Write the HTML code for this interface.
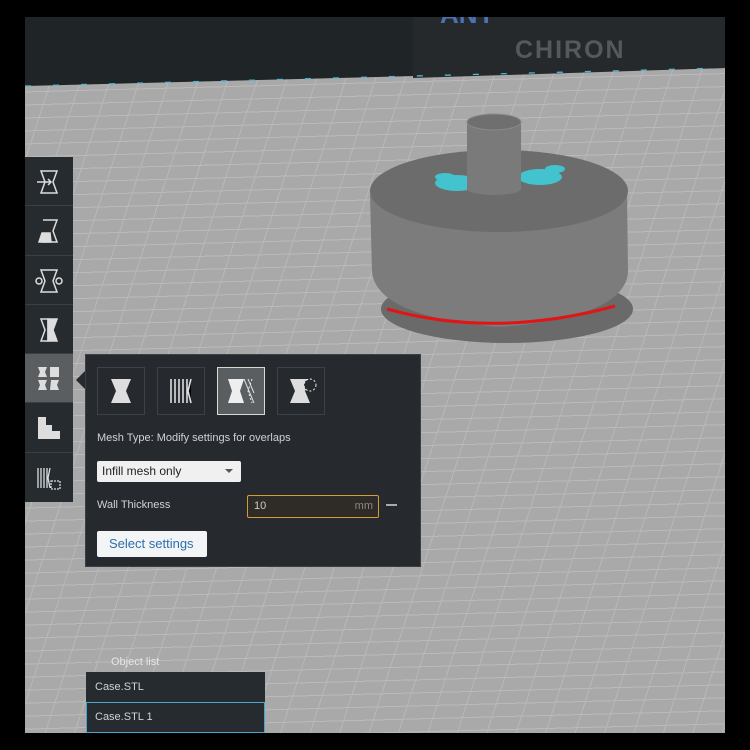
<!DOCTYPE html>
<html><head><meta charset="utf-8"><style>
*{margin:0;padding:0;box-sizing:border-box}
body{width:750px;height:750px;background:#000;position:relative;overflow:hidden;font-family:"Liberation Sans","DejaVu Sans",sans-serif}
#vp{position:absolute;left:25px;top:17px;width:700px;height:716px;overflow:hidden;background:#a9a9a9}
#grid{position:absolute;left:-100px;top:0;width:900px;height:716px;
background:
repeating-linear-gradient(178.5deg,transparent 0 12px,#bababa 12px 13px),
repeating-linear-gradient(108deg,transparent 0 27px,#b8b8b8 27px 28px);}
.tb{position:absolute;left:25px;top:157px;width:48px;height:345px;background:#262b30}
.ti{height:49.3px;border-bottom:1px solid #3a3f44;position:relative}
.ti.a{background:#5b5e61}
.ti svg{position:absolute;left:10px;top:11px}
.panel{position:absolute;left:85px;top:354px;width:336px;height:213px;background:#262a2e;border:1px solid #3b4045}
.arrow{position:absolute;left:76px;top:370px;width:0;height:0;border-top:10px solid transparent;border-bottom:10px solid transparent;border-right:10px solid #262a2e}
.mb{position:absolute;top:12px;width:48px;height:48px;border:1px solid #3d4247}
.mb.s{background:#5b5e61;border-color:#d8d8d8}
.t{position:absolute;color:#d0d3d5;font-size:11px;white-space:nowrap}
</style></head><body>
<div id="vp"><div id="grid"></div>
<svg width="700" height="716" style="position:absolute;left:0;top:0">
<polygon points="0,0 700,0 700,51 0,69" fill="#1f2427"/>
<polygon points="388,0 700,0 700,51 388,61" fill="#26292c"/>
<text x="490" y="41" font-size="25" font-weight="bold" fill="#55595c" letter-spacing="2" font-family="Liberation Sans">CHIRON</text>
<text x="415" y="6" font-size="26" font-weight="bold" fill="#4a72b0" font-family="Liberation Sans">ANY</text>
<line x1="0" y1="69" x2="700" y2="51" stroke="#4fb8d4" stroke-width="1.3" stroke-dasharray="6 22"/>
<ellipse cx="482" cy="292" rx="126" ry="34" fill="#6a6a6a"/>
<path d="M345 178 L347 255 Q352 300 475 310 Q600 300 603 255 L602 175 Z" fill="#7c7c7c"/>
<path d="M362 292 Q470 322 590 289" stroke="#e01515" stroke-width="3" fill="none"/>
<ellipse cx="474" cy="174" rx="129" ry="41" fill="#6c6c6c"/>
<g fill="#35e0ee" opacity=".75">
<ellipse cx="432" cy="166" rx="22" ry="8"/><ellipse cx="515" cy="160" rx="22" ry="8"/>
<ellipse cx="420" cy="160" rx="10" ry="4"/><ellipse cx="530" cy="152" rx="10" ry="4"/></g>
<rect x="442" y="105" width="54" height="68" fill="#7a7a7a"/>
<ellipse cx="469" cy="172" rx="27" ry="6" fill="#7a7a7a"/>
<ellipse cx="469" cy="105" rx="27" ry="8" fill="#6f6f6f" stroke="#8a8a8a"/>
</svg>
</div>
<div class="tb">
<div class="ti"><svg width="28" height="28" fill="none" stroke="#ddd" stroke-width="1.5"><path d="M6 3h16l-4 11 4 11H6l4-11z M2 14h14 M13 11l3 3-3 3"/></svg></div>
<div class="ti"><svg width="28" height="28" fill="none" stroke="#ddd" stroke-width="1.5"><path d="M8 3h14l-4 11 4 11H6"/><path d="M4 25l3-9h8l1 9z" fill="#ddd"/></svg></div>
<div class="ti"><svg width="28" height="28" fill="none" stroke="#ddd" stroke-width="1.5"><path d="M6 3h16l-4 11 4 11H6l4-11z"/><circle cx="4" cy="14" r="3"/><circle cx="24" cy="14" r="3"/></svg></div>
<div class="ti"><svg width="28" height="28" fill="none" stroke="#ddd" stroke-width="1.5"><path d="M6 3h7v22H6l4-11z"/><path d="M13 3h9l-4 11 4 11h-9z" fill="#ddd"/></svg></div>
<div class="ti a"><svg width="28" height="28" fill="#ddd"><path d="M3 2h9l-2 5 2 5H3l2-5z M15 2h9v10h-9z M3 15h9l-2 5 2 5H3l2-5z M16 15h8l-2 5 2 5h-9z"/></svg></div>
<div class="ti"><svg width="28" height="28" fill="#ddd"><path d="M3 3h8v8h6v6h8v8H3z"/></svg></div>
<div class="ti" style="border:0"><svg width="28" height="28" fill="none" stroke="#ddd" stroke-width="1.3"><path d="M3 4v20M6 4v20M9 4v20M12 4v20M15 4l-2 10 2 10"/><rect x="16" y="17" width="9" height="8" stroke-dasharray="2 1"/></svg></div>
</div>
<div class="arrow"></div>
<div class="panel">
<div class="mb" style="left:11px"><svg width="46" height="46"><path d="M13 11h20l-5 12 5 12H13l5-12z" fill="#ddd"/></svg></div>
<div class="mb" style="left:71px"><svg width="46" height="46" stroke="#ddd" stroke-width="1.6"><path d="M13 11v24M17 11v24M21 11v24M25 11v24M29 11v24M33 11l-3 12 3 12"/></svg></div>
<div class="mb s" style="left:131px"><svg width="46" height="46"><path d="M10 11h16l-4 12 4 12H10l4-12z" fill="#eee"/><path d="M26 11l10 24M30 11l6 14" stroke="#ddd"/><path d="M34 11l-4 12 4 12" stroke="#eee" stroke-dasharray="2 2" fill="none"/></svg></div>
<div class="mb" style="left:191px"><svg width="46" height="46"><path d="M12 11h20l-5 12 5 12H12l5-12z" fill="#ddd"/><circle cx="32" cy="17" r="6" fill="#262a2e" stroke="#eee" stroke-dasharray="2 2"/></svg></div>
<div class="t" style="left:11px;top:77px">Mesh Type: Modify settings for overlaps</div>
<div style="position:absolute;left:11px;top:106px;width:144px;height:21px;background:#f0f0f0;border-radius:2px;font-size:12px;color:#222;padding:3px 5px">Infill mesh only<span style="position:absolute;right:8px;top:8px;border-left:4px solid transparent;border-right:4px solid transparent;border-top:4px solid #555"></span></div>
<div class="t" style="left:11px;top:144px">Wall Thickness</div>
<div style="position:absolute;left:161px;top:140px;width:132px;height:23px;background:#2f2b27;border:1px solid #d49b3c;border-radius:2px;font-size:11px;color:#ccc;padding:4px 6px">10<span style="position:absolute;right:5px;color:#888">mm</span></div>
<div style="position:absolute;left:300px;top:149px;width:11px;height:2px;background:#aaa"></div>
<div style="position:absolute;left:11px;top:176px;width:110px;height:26px;background:#f2f4f6;border-radius:2px;font-size:13px;color:#2c6eae;padding:5px 12px">Select settings</div>
</div>
<svg width="12" height="8" style="position:absolute;left:87px;top:657px"><path d="M1 1l5 5 5-5" stroke="#aaa" fill="none" stroke-width="1.5"/></svg>
<div class="t" style="left:111px;top:656px;color:#e6e6e6">Object list</div>
<div style="position:absolute;left:86px;top:672px;width:179px;height:31px;background:#262b30"><div class="t" style="left:9px;top:9px">Case.STL</div></div>
<div style="position:absolute;left:86px;top:702px;width:179px;height:31px;background:#262b30;border:1px solid #4aa3d0"><div class="t" style="left:8px;top:8px">Case.STL 1</div></div>
</body></html>
